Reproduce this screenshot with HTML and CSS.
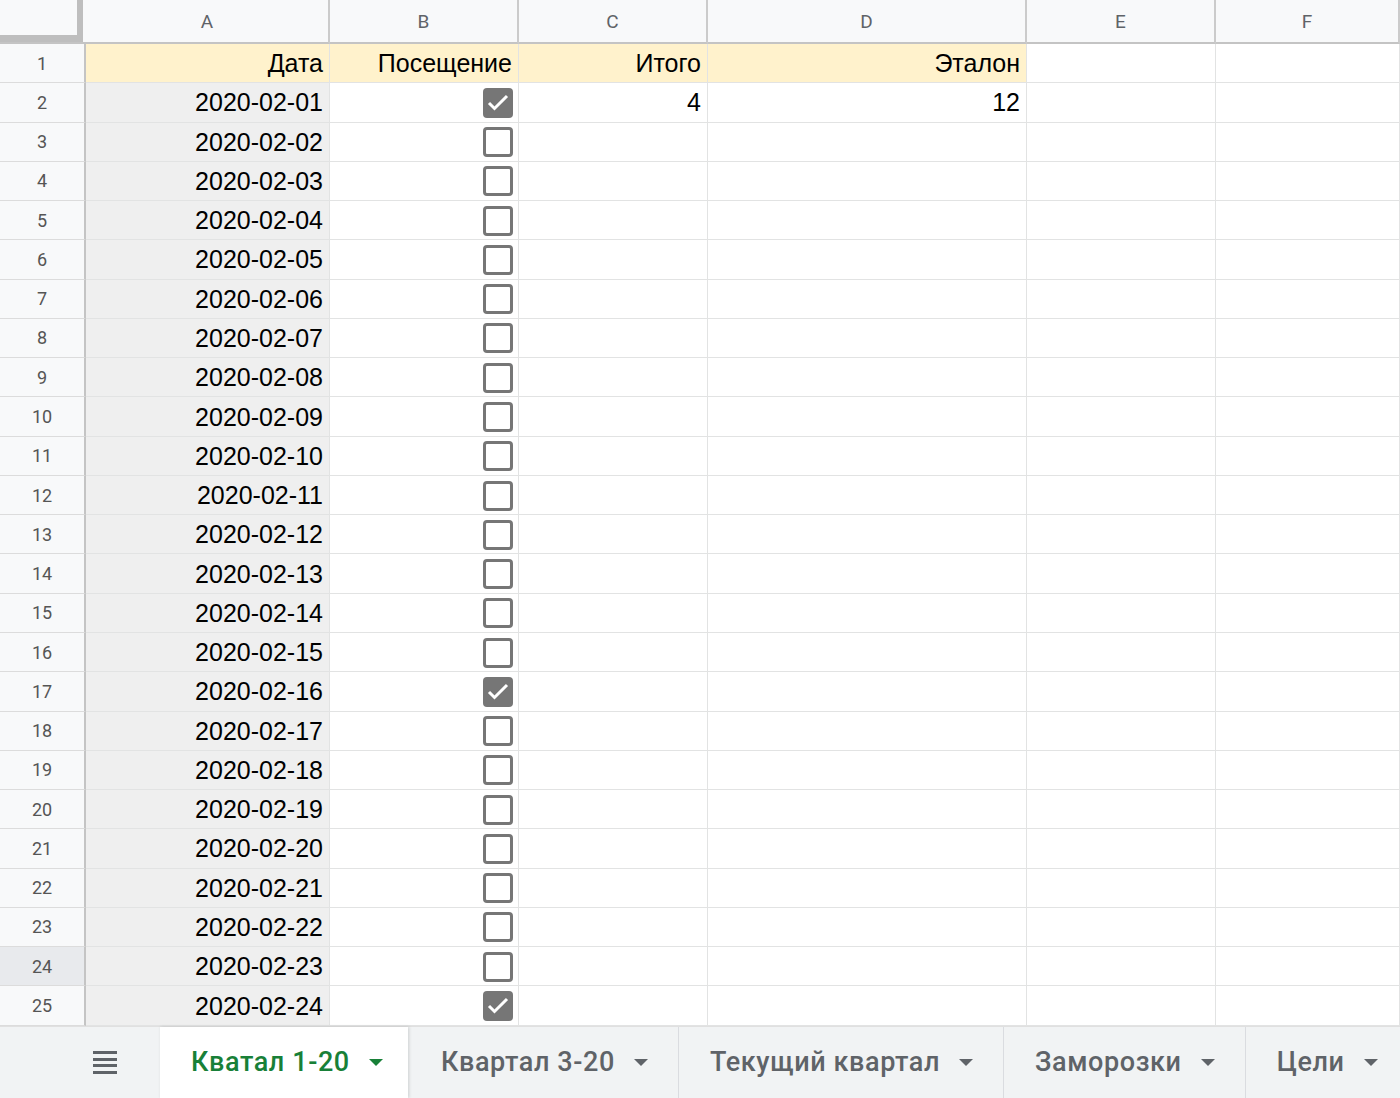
FILE: index.html
```html
<!DOCTYPE html>
<html>
  <head>
    <meta charset="UTF-8">
    <title>Посещения</title>
    <link rel="stylesheet" href="styles.css">
  </head>
  <body>
    <div class="page">
      <div class="sheet">
        <div class="corner"><div class="freeze"></div></div>
        <div class="colhead">A</div><div class="colhead">B</div><div class="colhead">C</div><div class="colhead">D</div><div class="colhead">E</div><div class="colhead">F</div>

        <div class="rowhead">1</div>
        <div class="cell title">Дата</div><div class="cell title">Посещение</div><div class="cell title">Итого</div><div class="cell title">Эталон</div><div class="cell"></div><div class="cell"></div>

        <div class="rowhead">2</div>
        <div class="cell date">2020-02-01</div>
        <div class="cell"><span class="cb on"><svg viewBox="0 0 30 30"><path d="M6 15l5.5 5.5L24 8"/></svg></span></div>
        <div class="cell">4</div><div class="cell">12</div><div class="cell"></div><div class="cell"></div>

        <div class="rowhead">3</div><div class="cell date">2020-02-02</div><div class="cell"><span class="cb"></span></div><div class="cell"></div><div class="cell"></div><div class="cell"></div><div class="cell"></div>
        <div class="rowhead">4</div><div class="cell date">2020-02-03</div><div class="cell"><span class="cb"></span></div><div class="cell"></div><div class="cell"></div><div class="cell"></div><div class="cell"></div>
        <div class="rowhead">5</div><div class="cell date">2020-02-04</div><div class="cell"><span class="cb"></span></div><div class="cell"></div><div class="cell"></div><div class="cell"></div><div class="cell"></div>
        <div class="rowhead">6</div><div class="cell date">2020-02-05</div><div class="cell"><span class="cb"></span></div><div class="cell"></div><div class="cell"></div><div class="cell"></div><div class="cell"></div>
        <div class="rowhead">7</div><div class="cell date">2020-02-06</div><div class="cell"><span class="cb"></span></div><div class="cell"></div><div class="cell"></div><div class="cell"></div><div class="cell"></div>
        <div class="rowhead">8</div><div class="cell date">2020-02-07</div><div class="cell"><span class="cb"></span></div><div class="cell"></div><div class="cell"></div><div class="cell"></div><div class="cell"></div>
        <div class="rowhead">9</div><div class="cell date">2020-02-08</div><div class="cell"><span class="cb"></span></div><div class="cell"></div><div class="cell"></div><div class="cell"></div><div class="cell"></div>
        <div class="rowhead">10</div><div class="cell date">2020-02-09</div><div class="cell"><span class="cb"></span></div><div class="cell"></div><div class="cell"></div><div class="cell"></div><div class="cell"></div>
        <div class="rowhead">11</div><div class="cell date">2020-02-10</div><div class="cell"><span class="cb"></span></div><div class="cell"></div><div class="cell"></div><div class="cell"></div><div class="cell"></div>
        <div class="rowhead">12</div><div class="cell date">2020-02-11</div><div class="cell"><span class="cb"></span></div><div class="cell"></div><div class="cell"></div><div class="cell"></div><div class="cell"></div>
        <div class="rowhead">13</div><div class="cell date">2020-02-12</div><div class="cell"><span class="cb"></span></div><div class="cell"></div><div class="cell"></div><div class="cell"></div><div class="cell"></div>
        <div class="rowhead">14</div><div class="cell date">2020-02-13</div><div class="cell"><span class="cb"></span></div><div class="cell"></div><div class="cell"></div><div class="cell"></div><div class="cell"></div>
        <div class="rowhead">15</div><div class="cell date">2020-02-14</div><div class="cell"><span class="cb"></span></div><div class="cell"></div><div class="cell"></div><div class="cell"></div><div class="cell"></div>
        <div class="rowhead">16</div><div class="cell date">2020-02-15</div><div class="cell"><span class="cb"></span></div><div class="cell"></div><div class="cell"></div><div class="cell"></div><div class="cell"></div>
        <div class="rowhead">17</div><div class="cell date">2020-02-16</div><div class="cell"><span class="cb on"><svg viewBox="0 0 30 30"><path d="M6 15l5.5 5.5L24 8"/></svg></span></div><div class="cell"></div><div class="cell"></div><div class="cell"></div><div class="cell"></div>
        <div class="rowhead">18</div><div class="cell date">2020-02-17</div><div class="cell"><span class="cb"></span></div><div class="cell"></div><div class="cell"></div><div class="cell"></div><div class="cell"></div>
        <div class="rowhead">19</div><div class="cell date">2020-02-18</div><div class="cell"><span class="cb"></span></div><div class="cell"></div><div class="cell"></div><div class="cell"></div><div class="cell"></div>
        <div class="rowhead">20</div><div class="cell date">2020-02-19</div><div class="cell"><span class="cb"></span></div><div class="cell"></div><div class="cell"></div><div class="cell"></div><div class="cell"></div>
        <div class="rowhead">21</div><div class="cell date">2020-02-20</div><div class="cell"><span class="cb"></span></div><div class="cell"></div><div class="cell"></div><div class="cell"></div><div class="cell"></div>
        <div class="rowhead">22</div><div class="cell date">2020-02-21</div><div class="cell"><span class="cb"></span></div><div class="cell"></div><div class="cell"></div><div class="cell"></div><div class="cell"></div>
        <div class="rowhead">23</div><div class="cell date">2020-02-22</div><div class="cell"><span class="cb"></span></div><div class="cell"></div><div class="cell"></div><div class="cell"></div><div class="cell"></div>
        <div class="rowhead selected">24</div><div class="cell date">2020-02-23</div><div class="cell"><span class="cb"></span></div><div class="cell"></div><div class="cell"></div><div class="cell"></div><div class="cell"></div>
        <div class="rowhead">25</div><div class="cell date">2020-02-24</div><div class="cell"><span class="cb on"><svg viewBox="0 0 30 30"><path d="M6 15l5.5 5.5L24 8"/></svg></span></div><div class="cell"></div><div class="cell"></div><div class="cell"></div><div class="cell"></div>
      </div>

      <div class="tabbar">
        <div class="all-sheets">
          <span class="burger"><i></i><i></i><i></i><i></i></span>
        </div>
        <div class="tab active">Кватал 1-20<span class="caret"></span></div>
        <div class="tab">Квартал 3-20<span class="caret"></span></div>
        <div class="tab">Текущий квартал<span class="caret"></span></div>
        <div class="tab">Заморозки<span class="caret"></span></div>
        <div class="tab">Цели<span class="caret"></span></div>
      </div>
    </div>
  </body>
</html>
```

FILE: styles.css
```css
html, body {
  margin: 0;
  padding: 0;
  background: #fff;
}
.page {
  width: 1400px;
  height: 1098px;
  overflow: hidden;
  display: flex;
  flex-direction: column;
}

/* grid */
.sheet {
  display: grid;
  grid-template-columns: 86px 244px 189px 189px 319px 189px 1fr;
  grid-template-rows: 44px repeat(25, 39.28px);
  font-family: "Liberation Sans", Arial, sans-serif;
}
.corner {
  background: #f8f9fa;
  border-bottom: 2px solid #c4c4c4;
}
.freeze {
  width: 83px;
  height: 42px;
  box-sizing: border-box;
  border-right: 6px solid #bebebe;
  border-bottom: 7px solid #bebebe;
}
.colhead {
  background: #f8f9fa;
  border-right: 2px solid #cbcbcb;
  border-bottom: 2px solid #c4c4c4;
  display: flex;
  align-items: center;
  justify-content: center;
  font-family: Roboto, "Liberation Sans", sans-serif;
  font-size: 19px;
  color: #5f6368;
}
.colhead:last-child {
  border-right: none;
}
.rowhead {
  background: #f8f9fa;
  border-right: 2px solid #c4c4c4;
  border-bottom: 1px solid #dcdcdc;
  display: flex;
  align-items: center;
  justify-content: center;
  font-family: Roboto, "Liberation Sans", sans-serif;
  font-size: 18px;
  color: #555;
}
.rowhead.selected {
  background: #e8eaed;
}
.cell {
  border-right: 1px solid #e2e3e3;
  border-bottom: 1px solid #e2e3e3;
  display: flex;
  align-items: center;
  justify-content: flex-end;
  padding: 1px 6px 0 0;
  font-size: 25px;
  color: #000;
  white-space: nowrap;
  min-width: 0;
  overflow: hidden;
}
.cell.title {
  background: #fff2cc;
}
.cell.date {
  background: #efefef;
}

/* checkboxes */
.cb {
  width: 30px;
  height: 30px;
  box-sizing: border-box;
  border: 3px solid #767676;
  border-radius: 4px;
  margin-right: -1px;
  display: block;
}
.cb.on {
  background: #767676;
  border: none;
}
.cb svg {
  display: block;
  width: 30px;
  height: 30px;
}
.cb path {
  fill: none;
  stroke: #fff;
  stroke-width: 3;
}

/* sheet tabs */
.tabbar {
  flex: 1;
  display: flex;
  align-items: stretch;
  background: #f1f3f4;
  border-top: 1px solid #e0e0e0;
  font-family: Roboto, "Liberation Sans", sans-serif;
  font-size: 27px;
  font-weight: 500;
  letter-spacing: 0.6px;
  color: #5f6368;
}
.all-sheets {
  flex: none;
  width: 160px;
  display: flex;
  align-items: center;
  padding-left: 93px;
  box-sizing: border-box;
}
.burger {
  display: flex;
  flex-direction: column;
  gap: 3.5px;
}
.burger i {
  display: block;
  width: 24px;
  height: 3px;
  background: #5f6368;
}
.tab {
  flex: none;
  display: flex;
  align-items: center;
  padding: 0 30px 0 31px;
  border-right: 1px solid #dadce0;
  white-space: nowrap;
}
.tab.active {
  background: #fff;
  color: #188038;
  box-shadow: 1px 0 3px rgba(60, 64, 67, 0.2);
  border-right: none;
  width: 248px;
  box-sizing: border-box;
  margin-right: 2px;
}
.caret {
  width: 0;
  height: 0;
  margin-left: 19px;
  border-left: 7px solid transparent;
  border-right: 7px solid transparent;
  border-top: 7px solid currentColor;
  margin-top: 1px;
}
```
